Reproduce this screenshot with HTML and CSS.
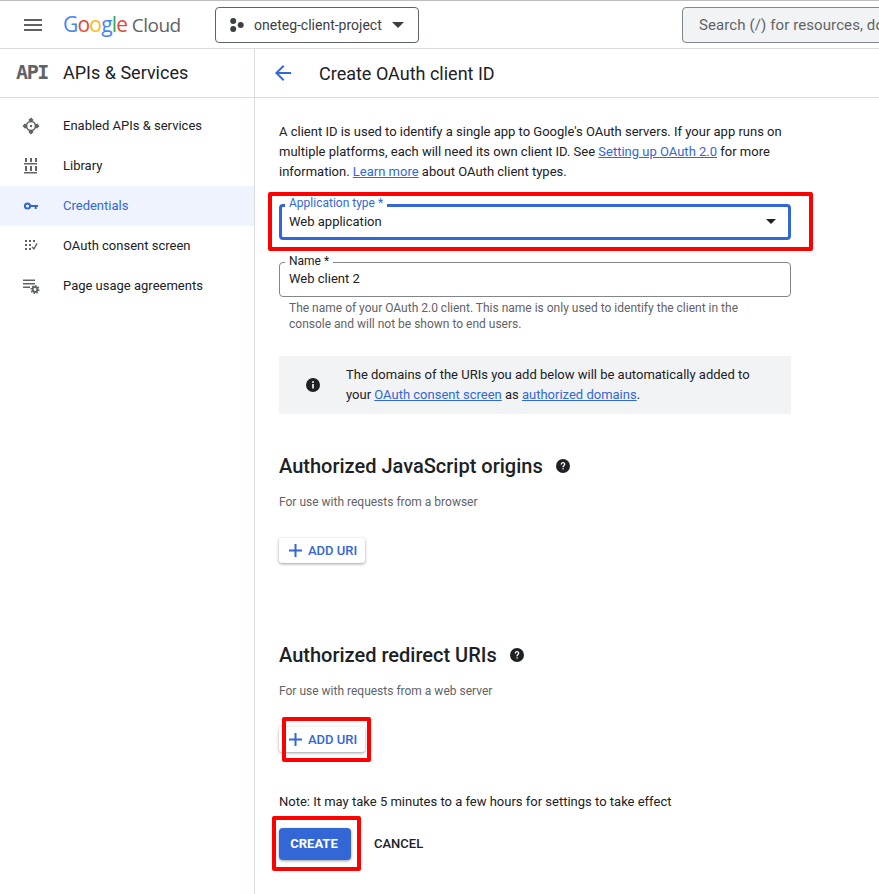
FILE: index.html
```html
<!DOCTYPE html>
<html lang="en">
<head>
  <meta charset="UTF-8">
  <title>Create OAuth client ID</title>
  <link rel="stylesheet" href="styles.css">
</head>
<body>
  <header class="topbar">
    <svg class="menu-icon" width="18" height="12" viewBox="0 0 18 12"><path d="M0 0h18v2H0zM0 5h18v2H0zM0 10h18v2H0z" fill="#5f6368"/></svg>
    <div class="logo"><span class="google"><span class="blue">G</span><span class="red">o</span><span class="yellow">o</span><span class="blue">g</span><span class="green">l</span><span class="red">e</span></span> <span class="cloud">Cloud</span></div>
    <div class="project">
      <svg width="14" height="14" viewBox="0 0 14 14" fill="#3c4043"><circle cx="3.200" cy="3" r="3"/><circle cx="3.200" cy="11" r="3"/><circle cx="10.700" cy="7" r="3"/></svg>
      <span>oneteg-client-project</span>
      <i class="caret"></i>
    </div>
    <div class="search">Search (/) for resources, docs, products, and more</div>
  </header>

  <div class="layout">
    <aside class="sidebar">
      <div class="side-title">
        <span class="api-mark">API</span>
        <span>APIs &amp; Services</span>
      </div>
      <nav class="side-nav">
        <div class="nav-item">
          <svg width="18" height="18" viewBox="0 0 18 18" fill="#5f6368"><path d="M6.300 3L9 .5 11.700 3 9 5.500zM6.300 15L9 12.500l2.700 2.500L9 17.500zM.5 9L3 6.300 5.500 9 3 11.700zM12.500 9L15 6.300 17.500 9 15 11.700z"/><circle cx="9" cy="9" r="4.500" fill="none" stroke="#5f6368" stroke-width="1.600"/><circle cx="9" cy="9" r="1.200"/></svg>
          Enabled APIs &amp; services
        </div>
        <div class="nav-item">
          <svg width="18" height="18" viewBox="0 0 18 18" fill="#5f6368"><path d="M3 1h2v4H3zM8 1h2v4H8zM13 1h2v4h-2zM2 6h13v1.500H2zM3 9h2v5H3zM8 9h2v5H8zM13 9h2v5h-2zM2 15h13v1.500H2z"/></svg>
          Library
        </div>
        <div class="nav-item active">
          <svg width="18" height="18" viewBox="0 0 18 18"><circle cx="5.500" cy="9" r="2.600" fill="none" stroke="#3367d6" stroke-width="2"/><path d="M8.500 8h7.500v2h-1.300v2h-2v-2H8.500z" fill="#3367d6"/></svg>
          Credentials
        </div>
        <div class="nav-item">
          <svg width="18" height="18" viewBox="0 0 18 18" fill="#5f6368"><path d="M3 3h2v2H3zM7 3h2v2H7zM11 3h2v2h-2zM3 7h2v2H3zM7 7h2v2H7zM3 11h2v2H3zM7 11h2v2H7zM9.500 10.500l1-1 1.300 1.300 2.700-4.800 1.200.7-3.600 6.300z"/></svg>
          OAuth consent screen
        </div>
        <div class="nav-item">
          <svg width="18" height="18" viewBox="0 0 18 18" fill="#5f6368"><path d="M1 2.500h12V4H1zM1 6h12v1.500H1zM1 9.500h7V11H1z"/><circle cx="13" cy="12.500" r="2.400" fill="none" stroke="#5f6368" stroke-width="2"/><circle cx="13" cy="12.500" r="3.900" fill="none" stroke="#5f6368" stroke-width="1.400" stroke-dasharray="1.500 1.500"/></svg>
          Page usage agreements
        </div>
      </nav>
    </aside>

    <main class="content">
      <div class="page-head">
        <svg width="16" height="16" viewBox="0 0 16 16"><path d="M16 7H3.800l5.600-5.600L8 0 0 8l8 8 1.400-1.400L3.800 9H16z" fill="#3367d6"/></svg>
        <h1>Create OAuth client ID</h1>
      </div>

      <div class="form">
        <p class="intro">A client ID is used to identify a single app to Google's OAuth servers. If your app runs on multiple platforms, each will need its own client ID. See <a>Setting up OAuth 2.0</a> for more information. <a>Learn more</a> about OAuth client types.</p>

        <div class="field field-focus">
          <label>Application type *</label>
          <span>Web application</span>
          <i class="caret dark"></i>
        </div>

        <div class="field field-name">
          <label>Name *</label>
          <span>Web client 2</span>
        </div>
        <p class="hint">The name of your OAuth 2.0 client. This name is only used to identify the client in the console and will not be shown to end users.</p>

        <div class="notice">
          <svg width="14" height="14" viewBox="0 0 14 14"><circle cx="7" cy="7" r="7" fill="#202124"/><path d="M6.200 6h1.600v4.500H6.200zM6.200 3.300h1.600v1.600H6.200z" fill="#fff"/></svg>
          <p>The domains of the URIs you add below will be automatically added to your <a>OAuth consent screen</a> as <a>authorized domains</a>.</p>
        </div>

        <section class="uri-block">
          <h2>Authorized JavaScript origins
            <svg width="14" height="14" viewBox="0 0 14 14"><circle cx="7" cy="7" r="7" fill="#202124"/><path d="M4.700 5.400C4.700 4 5.700 3 7 3s2.300 1 2.300 2.200c0 1.500-1.600 1.600-1.600 3H6.400c0-2 1.600-2 1.600-3C8 4.700 7.500 4.300 7 4.300S6 4.700 6 5.400zM6.400 9.200h1.300v1.400H6.400z" fill="#fff"/></svg>
          </h2>
          <p class="hint">For use with requests from a browser</p>
          <button class="add-uri"><svg width="13" height="13" viewBox="0 0 13 13"><path d="M5.500 0h2v5.500H13v2H7.500V13h-2V7.500H0v-2h5.500z" fill="#3367d6"/></svg>ADD URI</button>
        </section>

        <section class="uri-block second">
          <h2>Authorized redirect URIs
            <svg width="14" height="14" viewBox="0 0 14 14"><circle cx="7" cy="7" r="7" fill="#202124"/><path d="M4.700 5.400C4.700 4 5.700 3 7 3s2.300 1 2.300 2.200c0 1.500-1.600 1.600-1.600 3H6.400c0-2 1.600-2 1.600-3C8 4.700 7.500 4.300 7 4.300S6 4.700 6 5.400zM6.400 9.200h1.300v1.400H6.400z" fill="#fff"/></svg>
          </h2>
          <p class="hint">For use with requests from a web server</p>
          <button class="add-uri"><svg width="13" height="13" viewBox="0 0 13 13"><path d="M5.500 0h2v5.500H13v2H7.500V13h-2V7.500H0v-2h5.500z" fill="#3367d6"/></svg>ADD URI</button>
        </section>

        <p class="note">Note: It may take 5 minutes to a few hours for settings to take effect</p>
        <div class="actions">
          <button class="create">CREATE</button>
          <button class="cancel">CANCEL</button>
        </div>
      </div>
    </main>
  </div>

  <!-- red annotation boxes drawn over the screenshot -->
  <div class="mark mark-type"></div>
  <div class="mark mark-uri"></div>
  <div class="mark mark-create"></div>
</body>
</html>
```

FILE: styles.css
```css
* {
  box-sizing: border-box;
}

html, body {
  height: 894px;
  overflow: hidden;
}

body {
  margin: 0;
  position: relative;
  font-family: Roboto, "Liberation Sans", sans-serif;
  font-size: 13px;
  color: #202124;
  background: #fff;
}

.topbar {
  display: flex;
  align-items: center;
  height: 49px;
  padding-left: 24px;
  border-top: 1px solid #bdbdbd;
  border-bottom: 1px solid #dadce0;
  white-space: nowrap;
  overflow: hidden;
}

.menu-icon {
  flex: none;
}

.logo {
  flex: none;
  width: 129px;
  margin: -2px 0 0 21px;
  font-family: "Open Sans", sans-serif;
  font-size: 19px;
  letter-spacing: -0.5px;
}

.google {
  font-size: 21px;
  letter-spacing: -0.8px;
}

.blue { color: #4285f4; }
.red { color: #ea4335; }
.yellow { color: #fbbc05; }
.green { color: #34a853; }
.cloud { color: #5f6368; }

.project {
  display: flex;
  align-items: center;
  flex: none;
  width: 204px;
  height: 36px;
  margin-left: 23px;
  padding-left: 14px;
  border: 1px solid #5f6368;
  border-radius: 4px;
  font-size: 14px;
  color: #3c4043;
}

.project span {
  margin-left: 10px;
}

.caret {
  width: 0;
  height: 0;
  margin-left: 10px;
  border-left: 6px solid transparent;
  border-right: 6px solid transparent;
  border-top: 6px solid #3c4043;
}

.search {
  flex: none;
  width: 400px;
  height: 36px;
  margin-left: 263px;
  padding-left: 16px;
  line-height: 34px;
  font-size: 15px;
  letter-spacing: 0.1px;
  color: #5f6368;
  background: #f1f3f4;
  border: 1px solid #80868b;
  border-radius: 4px;
}

.layout {
  display: flex;
  height: 845px;
}

.sidebar {
  flex: none;
  width: 255px;
  border-right: 1px solid #dadce0;
}

.side-title {
  display: flex;
  align-items: center;
  height: 49px;
  padding: 0 0 2px 16px;
  border-bottom: 1px solid #dadce0;
  font-size: 18px;
}

.api-mark {
  width: 47px;
  font-family: "DejaVu Sans Mono", monospace;
  font-size: 20px;
  font-weight: 700;
  letter-spacing: -1.400px;
  color: #5f6368;
}

.side-nav {
  padding-top: 8px;
}

.nav-item {
  display: flex;
  align-items: center;
  gap: 23px;
  height: 40px;
  padding: 0 0 2px 22px;
  color: #202124;
}

.nav-item svg {
  margin-top: 2px;
}

.nav-item.active {
  color: #3367d6;
  background: #eef3fd;
}

.content {
  flex: 1;
  min-width: 0;
}

.page-head {
  display: flex;
  align-items: center;
  gap: 28px;
  height: 49px;
  padding-left: 20px;
  border-bottom: 1px solid #dadce0;
}

h1 {
  margin: 0;
  font-size: 18px;
  font-weight: 400;
}

.form {
  width: 536px;
  padding: 24px 0 0 24px;
}

.intro {
  margin: 0;
  line-height: 20px;
}

.intro a,
.notice a {
  color: #3367d6;
  text-decoration: underline;
}

.field {
  position: relative;
  height: 35px;
  padding-left: 9px;
  line-height: 32px;
  border: 1px solid #80868b;
  border-radius: 4px;
}

.field label {
  position: absolute;
  top: -9px;
  left: 5px;
  padding: 0 4px;
  font-size: 12px;
  line-height: 14px;
  background: #fff;
}

.field-focus {
  height: 36px;
  margin-top: 22px;
  padding-left: 7px;
  line-height: 30px;
  border: 3px solid #3367d6;
}

.field-focus label {
  color: #3367d6;
  left: 3px;
  top: -11px;
}

.field-focus .caret {
  position: absolute;
  right: 12px;
  top: 12px;
  margin: 0;
  border-left-width: 5px;
  border-right-width: 5px;
  border-top-width: 5px;
  border-top-color: #202124;
}

.field-name {
  margin-top: 22px;
}

.hint {
  margin: 3px 0 0;
  padding: 0 10px;
  font-size: 12px;
  line-height: 16px;
  color: #5f6368;
}

.notice {
  display: flex;
  align-items: center;
  gap: 26px;
  height: 58px;
  margin-top: 24px;
  padding-left: 27px;
  background: #f1f3f4;
  border-radius: 2px;
}

.notice svg {
  flex: none;
}

.notice p {
  margin: 0;
  width: 420px;
  line-height: 20px;
}

.uri-block {
  margin-top: 38px;
}

.uri-block.second {
  margin-top: 78px;
}

.uri-block h2 {
  display: flex;
  align-items: center;
  gap: 13px;
  margin: 0;
  font-size: 20px;
  line-height: 28px;
  font-weight: 500;
}

.uri-block .hint {
  margin-top: 14px;
  padding: 0;
}

.add-uri {
  display: flex;
  align-items: center;
  gap: 6px;
  width: 86px;
  height: 25px;
  margin-top: 28px;
  padding: 0 0 0 10px;
  border: 0;
  border-radius: 3px;
  font: 500 13px Roboto, sans-serif;
  color: #3367d6;
  background: #fff;
  box-shadow: 0 1px 3px rgba(60, 64, 67, 0.5);
}

.note {
  margin: 40px 0 0;
  line-height: 20px;
}

.actions {
  display: flex;
  align-items: center;
  gap: 23px;
  margin-top: 16px;
}

.create {
  width: 72px;
  height: 32px;
  padding: 0 2px 2px 0;
  border: 0;
  border-radius: 4px;
  font: 700 13px Roboto, sans-serif;
  color: #fff;
  background: #3367d6;
  box-shadow: 0 1px 3px rgba(60, 64, 67, 0.5);
}

.cancel {
  padding: 0 0 2px;
  border: 0;
  font: 500 13px Roboto, sans-serif;
  color: #202124;
  background: none;
}

.mark {
  position: absolute;
  border: 4px solid #f00;
  border-radius: 2px;
}

.mark-type {
  left: 268px;
  top: 192px;
  width: 545px;
  height: 59px;
}

.mark-uri {
  left: 282px;
  top: 717px;
  width: 89px;
  height: 45px;
}

.mark-create {
  left: 272px;
  top: 816px;
  width: 89px;
  height: 55px;
}
```
